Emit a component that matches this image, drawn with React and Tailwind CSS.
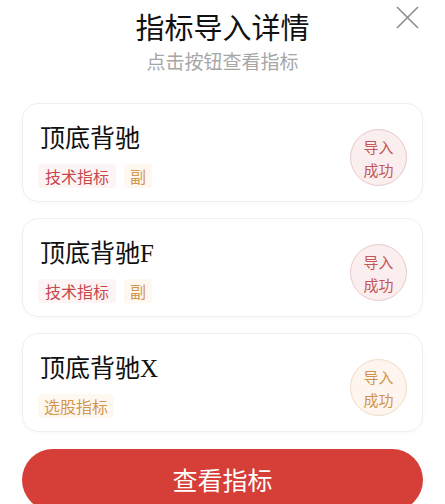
import React from 'react';

const items = [
    { name: '顶底背驰', tags: [{ text: '技术指标', tone: 'red' }, { text: '副', tone: 'orange' }], tone: 'red' },
    { name: '顶底背驰F', tags: [{ text: '技术指标', tone: 'red' }, { text: '副', tone: 'orange' }], tone: 'red' },
    { name: '顶底背驰X', tags: [{ text: '选股指标', tone: 'orange' }], tone: 'orange' },
];

const Tag = ({ text, tone }) => (
    <span
        className={
            tone === 'red'
                ? 'h-[24px] px-[7px] flex items-center rounded-[3px] bg-[#fdf5f5] text-[#c8474a] text-[16px]'
                : 'h-[24px] px-[6px] flex items-center rounded-[3px] bg-[#fef8f1] text-[#d4964f] text-[16px]'
        }
    >
        {text}
    </span>
);

const Badge = ({ tone }) => (
    <div
        className={
            tone === 'red'
                ? 'mt-[10px] w-[57px] h-[57px] rounded-full border border-[#e9c9cb] bg-[#fbeeee] text-[#c4555a] flex flex-col items-center justify-center text-[15px] leading-[23px]'
                : 'mt-[10px] w-[57px] h-[57px] rounded-full border border-[#f0dcc6] bg-[#fdf5ee] text-[#d2934f] flex flex-col items-center justify-center text-[15px] leading-[23px]'
        }
    >
        <span>导入</span>
        <span>成功</span>
    </div>
);

const App = () => {
    return (
        <div
            className="w-[445px] h-[504px] bg-white overflow-hidden relative"
            style={{ fontFamily: '"Noto Sans CJK SC", "Noto Sans", sans-serif' }}
        >
            {/* Close */}
            <button className="absolute right-[26px] top-[6px] w-[23px] h-[23px]">
                <svg viewBox="0 0 23 23" className="w-[23px] h-[23px]" fill="none" stroke="#8c8c8c" strokeWidth="1.6">
                    <path d="M1 1L22 22M22 1L1 22" />
                </svg>
            </button>

            {/* Header */}
            <div className="pt-[8px] flex flex-col items-center">
                <h1 className="text-[29px] leading-[36px] text-[#111]">指标导入详情</h1>
                <p className="mt-[5px] text-[19px] leading-[24px] text-[#a6a6a6]">点击按钮查看指标</p>
            </div>

            {/* List */}
            <div className="mt-[30px] px-[22px] flex flex-col gap-[16px]">
                {items.map((item) => (
                    <div
                        key={item.name}
                        className="h-[99px] rounded-[16px] border border-[#efefef] shadow-[0_1px_4px_rgba(0,0,0,0.03)] flex items-center justify-between pl-[17px] pr-[15px]"
                    >
                        <div className="flex flex-col pt-[4px]">
                            <div
                                className="text-[25px] leading-[34px] text-[#111]"
                                style={{ fontFamily: '"Liberation Serif", "Noto Sans CJK SC", serif' }}
                            >
                                {item.name}
                            </div>
                            <div className="mt-[8px] -ml-[2px] flex gap-[8px]">
                                {item.tags.map((t) => (
                                    <Tag key={t.text} text={t.text} tone={t.tone} />
                                ))}
                            </div>
                        </div>
                        <Badge tone={item.tone} />
                    </div>
                ))}
            </div>

            {/* Button */}
            <div className="mt-[17px] px-[22px]">
                <button className="w-full h-[62px] rounded-full bg-[#d63e38] text-white text-[25px]">
                    查看指标
                </button>
            </div>
        </div>
    );
};

export default App;
